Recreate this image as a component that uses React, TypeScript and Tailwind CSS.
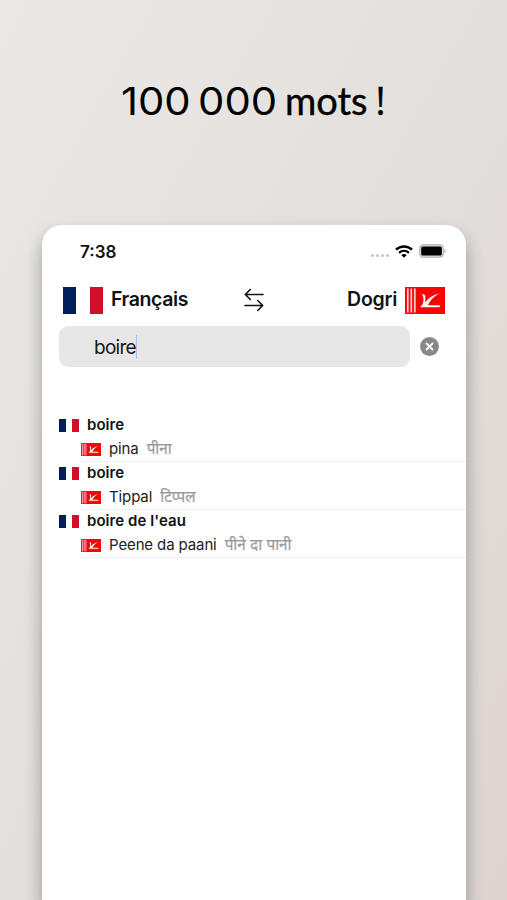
type Entry = {
  french: string;
  dogri: string;
  script: string;
};

const entries: Entry[] = [
  { french: "boire", dogri: "pina", script: "पीना" },
  { french: "boire", dogri: "Tippal", script: "टिप्पल" },
  { french: "boire de l'eau", dogri: "Peene da paani", script: "पीने दा पानी" },
];

function FrenchFlag({ className }: { className: string }) {
  return (
    <div className={`flex shrink-0 justify-between ${className}`}>
      <div className="w-1/3 bg-[#00205b]"></div>
      <div className="w-1/3 bg-[#ce1029]"></div>
    </div>
  );
}

function DogriFlag({ className }: { className: string }) {
  return (
    <svg className={`shrink-0 ${className}`} viewBox="0 0 40 27" preserveAspectRatio="none">
      <rect width="40" height="27" fill="#fb0207" />
      <path d="M2.800 1.500v24M6.300 1.500v24M9.800 1.500v24" stroke="#ffd0d0" strokeWidth="1.700" />
      <path
        d="M16.500 7c2.500.1 3.900 1.100 3.900 2.400 0 1.800-.2 3.900-.3 6C23.500 10.800 28 7.800 34.500 6.300c-5.300 2.500-9.100 6.600-11.600 11.900h11.400c.9 0 .9 2.100 0 2.100H16c-.9 0-.7-.8.2-1.200 1.700-1.600 2.200-4 2.300-6.100.1-2.400-.4-4.400-2-6z"
        fill="#fff"
      />
    </svg>
  );
}

function StatusBar() {
  return (
    <div className="flex h-[52px] items-center justify-between pt-px pr-5 pl-[38px]">
      <span className="pt-px text-[17px] leading-none font-semibold">7:38</span>
      <div className="flex items-center">
        <div className="mt-[8px] mr-[6px] flex gap-[2px]">
          <i className="size-[3px] rounded-full bg-[#c6c6c6]"></i>
          <i className="size-[3px] rounded-full bg-[#c6c6c6]"></i>
          <i className="size-[3px] rounded-full bg-[#c6c6c6]"></i>
          <i className="size-[3px] rounded-full bg-[#c6c6c6]"></i>
        </div>
        <svg className="mr-[6px] mb-px h-[13px] w-[18px]" viewBox="0 0 18 13" fill="none" stroke="#000" strokeWidth="2.3">
          <path d="M1 4.700C5.500.4 12.500.4 17 4.700" />
          <path d="M4 7.800c2.900-2.700 7.100-2.700 10 0" />
          <path d="M6.300 10c1.600-1.400 3.800-1.400 5.400 0L9 12.800z" fill="#000" stroke="none" />
        </svg>
        <svg className="mb-[2px] h-[14px] w-[27px]" viewBox="0 0 27 14">
          <rect x=".7" y=".7" width="23.600" height="12.600" rx="3.600" fill="#d8d8d8" stroke="#bdbdbd" strokeWidth="1.300" />
          <rect x="2.200" y="2.500" width="20.600" height="9" rx="1.500" />
          <path d="M25.500 5c1.600.7 1.600 3.300 0 4z" fill="#aaa" />
        </svg>
      </div>
    </div>
  );
}

function LanguageBar() {
  return (
    <div className="flex h-[46px] items-center px-[21px] text-[19.500px] font-semibold">
      <div className="flex flex-1 items-center gap-[8px]">
        <FrenchFlag className="h-[27px] w-10" />
        <span className="tracking-[-0.4px]">Français</span>
      </div>
      <svg className="h-6 w-5 shrink-0" viewBox="0 0 20 24" fill="none" stroke="#111" strokeWidth="1.600" strokeLinecap="round" strokeLinejoin="round">
        <path d="M19 6.500H1.500M6.300 1.500l-5 5 5 5" />
        <path d="M1 17.500h17.500M13.700 12.500l5 5-5 5" />
      </svg>
      <div className="flex flex-1 items-center justify-end gap-[8px]">
        <span className="tracking-[-0.250px]">Dogri</span>
        <DogriFlag className="h-[27px] w-10" />
      </div>
    </div>
  );
}

function SearchBar() {
  return (
    <div className="mt-[3px] flex items-center pl-[17px]">
      <div className="flex h-[41px] w-[351px] items-center rounded-[9px] bg-[#e7e7e7] pl-[35px]">
        <span className="pt-[3px] text-[19px] tracking-[-0.750px] text-[#161616]">boire</span>
        <span className="h-6 w-[1.500px] bg-[#a3c6f2]"></span>
      </div>
      <svg className="ml-[10px] size-[19px]" viewBox="0 0 19 19">
        <circle cx="9.500" cy="9.500" r="9.400" fill="#88888a" />
        <path d="M6.500 6.500l6 6M12.500 6.500l-6 6" stroke="#fff" strokeWidth="1.800" strokeLinecap="round" />
      </svg>
    </div>
  );
}

function EntryRow({ entry }: { entry: Entry }) {
  return (
    <li className="h-12 pl-[17px] text-[15px] leading-6">
      <div className="flex h-6 items-center gap-[8px]">
        <FrenchFlag className="h-[13px] w-5" />
        <span className="font-semibold tracking-[0.060px]">{entry.french}</span>
      </div>
      <div className="ml-[22px] flex h-[25px] items-center border-b border-[#f1f1f1]">
        <DogriFlag className="mr-[8px] h-[13px] w-5" />
        <span className="mr-[8px] tracking-[-0.120px] text-[#222]">{entry.dogri}</span>
        <span className="text-[15.300px] text-[#999] [-webkit-text-stroke:0.200px_#999]">{entry.script}</span>
      </div>
    </li>
  );
}

export default function App() {
  return (
    <main className="h-[900px] w-[507px] overflow-hidden bg-linear-to-br from-[#ebe9e6] via-[#e3dfdc] to-[#ddd5d0] font-['Inter','Noto_Sans',sans-serif] text-[#111]">
      <h1 className="flex h-[225px] pt-[76px] pl-[121px] font-['Lato',sans-serif] text-[38px] leading-[48px] font-normal whitespace-nowrap text-black [-webkit-text-stroke:0.4px_#000]">
        {/* Wide round digits */}
        <span className="w-[164px] origin-left scale-x-[1.100] pt-px font-['Inter',sans-serif] [-webkit-text-stroke:0] [word-spacing:-4px]">100 000</span>
        <span>mots</span>
        <span className="ml-[8px] font-['Open_Sans',sans-serif] font-medium">!</span>
      </h1>
      <section className="ml-[42px] h-[675px] w-[424px] rounded-t-[20px] bg-white shadow-[0_10px_18px_rgba(0,0,0,0.32)]">
        <StatusBar />
        <LanguageBar />
        <SearchBar />
        <ul className="mt-[46px]">
          {entries.map((entry, i) => (
            <EntryRow key={i} entry={entry} />
          ))}
        </ul>
      </section>
    </main>
  );
}
